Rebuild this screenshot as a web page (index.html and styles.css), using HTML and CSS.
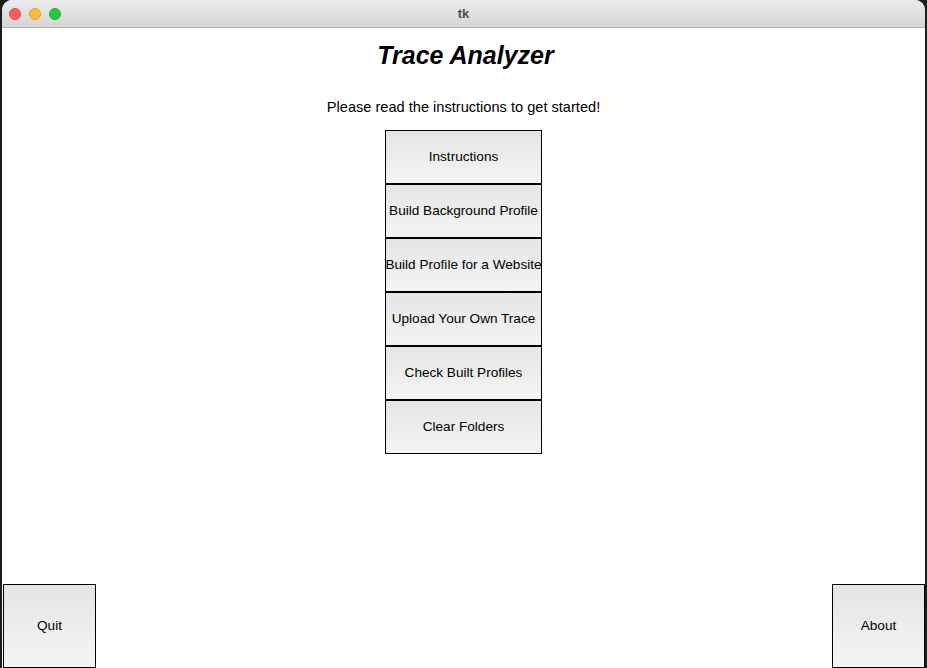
FILE: index.html
```html
<!DOCTYPE html>
<html>
<head>
<meta charset="utf-8">
<title>tk</title>
<link rel="stylesheet" href="styles.css">
</head>
<body>
<div class="window">
  <div class="titlebar">
    <div class="lights">
      <span class="light red"></span>
      <span class="light yellow"></span>
      <span class="light green"></span>
    </div>
    <div class="wtitle">tk</div>
  </div>
  <div class="content">
    <h1 class="heading">Trace Analyzer</h1>
    <p class="subtitle">Please read the instructions to get started!</p>
    <div class="menu">
      <div class="btn">Instructions</div>
      <div class="btn">Build Background Profile</div>
      <div class="btn">Build Profile for a Website</div>
      <div class="btn">Upload Your Own Trace</div>
      <div class="btn">Check Built Profiles</div>
      <div class="btn">Clear Folders</div>
    </div>
    <div class="bottom">
      <div class="btn big">Quit</div>
      <div class="btn big">About</div>
    </div>
  </div>
</div>
</body>
</html>
```
FILE: styles.css
```css
html, body {
  margin: 0;
  padding: 0;
  height: 668px;
  overflow: hidden;
  background: #1c1c1c;
}
.window {
  margin-left: 2px;
  width: 923px;
  height: 668px;
  background: #ffffff;
  border-radius: 10px 10px 0 0;
  overflow: hidden;
  display: flex;
  flex-direction: column;
  font-family: "Liberation Sans", Arial, sans-serif;
}
.titlebar {
  height: 27px;
  border-bottom: 1px solid #b3b3b3;
  background: linear-gradient(#ebebeb, #d5d5d5);
  display: flex;
  align-items: center;
  position: relative;
  flex: none;
}
.lights {
  display: flex;
  gap: 8px;
  padding-left: 7px;
}
.light {
  width: 12px;
  height: 12px;
  border-radius: 50%;
  box-sizing: border-box;
}
.red { background: #fe5f57; border: 1px solid #e0443e; }
.yellow { background: #febc2e; border: 1px solid #dea123; }
.green { background: #28c840; border: 1px solid #1aab29; }
.wtitle {
  position: absolute;
  left: 0;
  right: 0;
  top: 0;
  line-height: 27px;
  text-align: center;
  font-size: 13px;
  font-weight: bold;
  color: #4d4d4d;
}
.content {
  flex: 1;
  display: flex;
  flex-direction: column;
  align-items: center;
  padding-top: 13px;
}
.heading {
  margin: 0;
  padding-left: 4px;
  font-size: 25px;
  line-height: 28px;
  font-weight: bold;
  font-style: italic;
  color: #000;
}
.subtitle {
  margin: 29px 0 0;
  font-size: 14.6px;
  line-height: 18px;
  color: #000;
}
.menu {
  margin-top: 14px;
  display: flex;
  flex-direction: column;
  width: 157px;
}
.btn {
  box-sizing: border-box;
  height: 54px;
  padding-bottom: 2px;
  border: 1px solid #000;
  background: linear-gradient(#e5e5e5, #f4f4f4);
  display: flex;
  align-items: center;
  justify-content: center;
  font-size: 13.6px;
  color: #000;
  white-space: nowrap;
  overflow: hidden;
}
.bottom {
  margin-top: auto;
  align-self: stretch;
  display: flex;
  justify-content: space-between;
  padding: 0 0 0 1px;
}
.btn.big {
  width: 93px;
  height: 84px;
}
```
